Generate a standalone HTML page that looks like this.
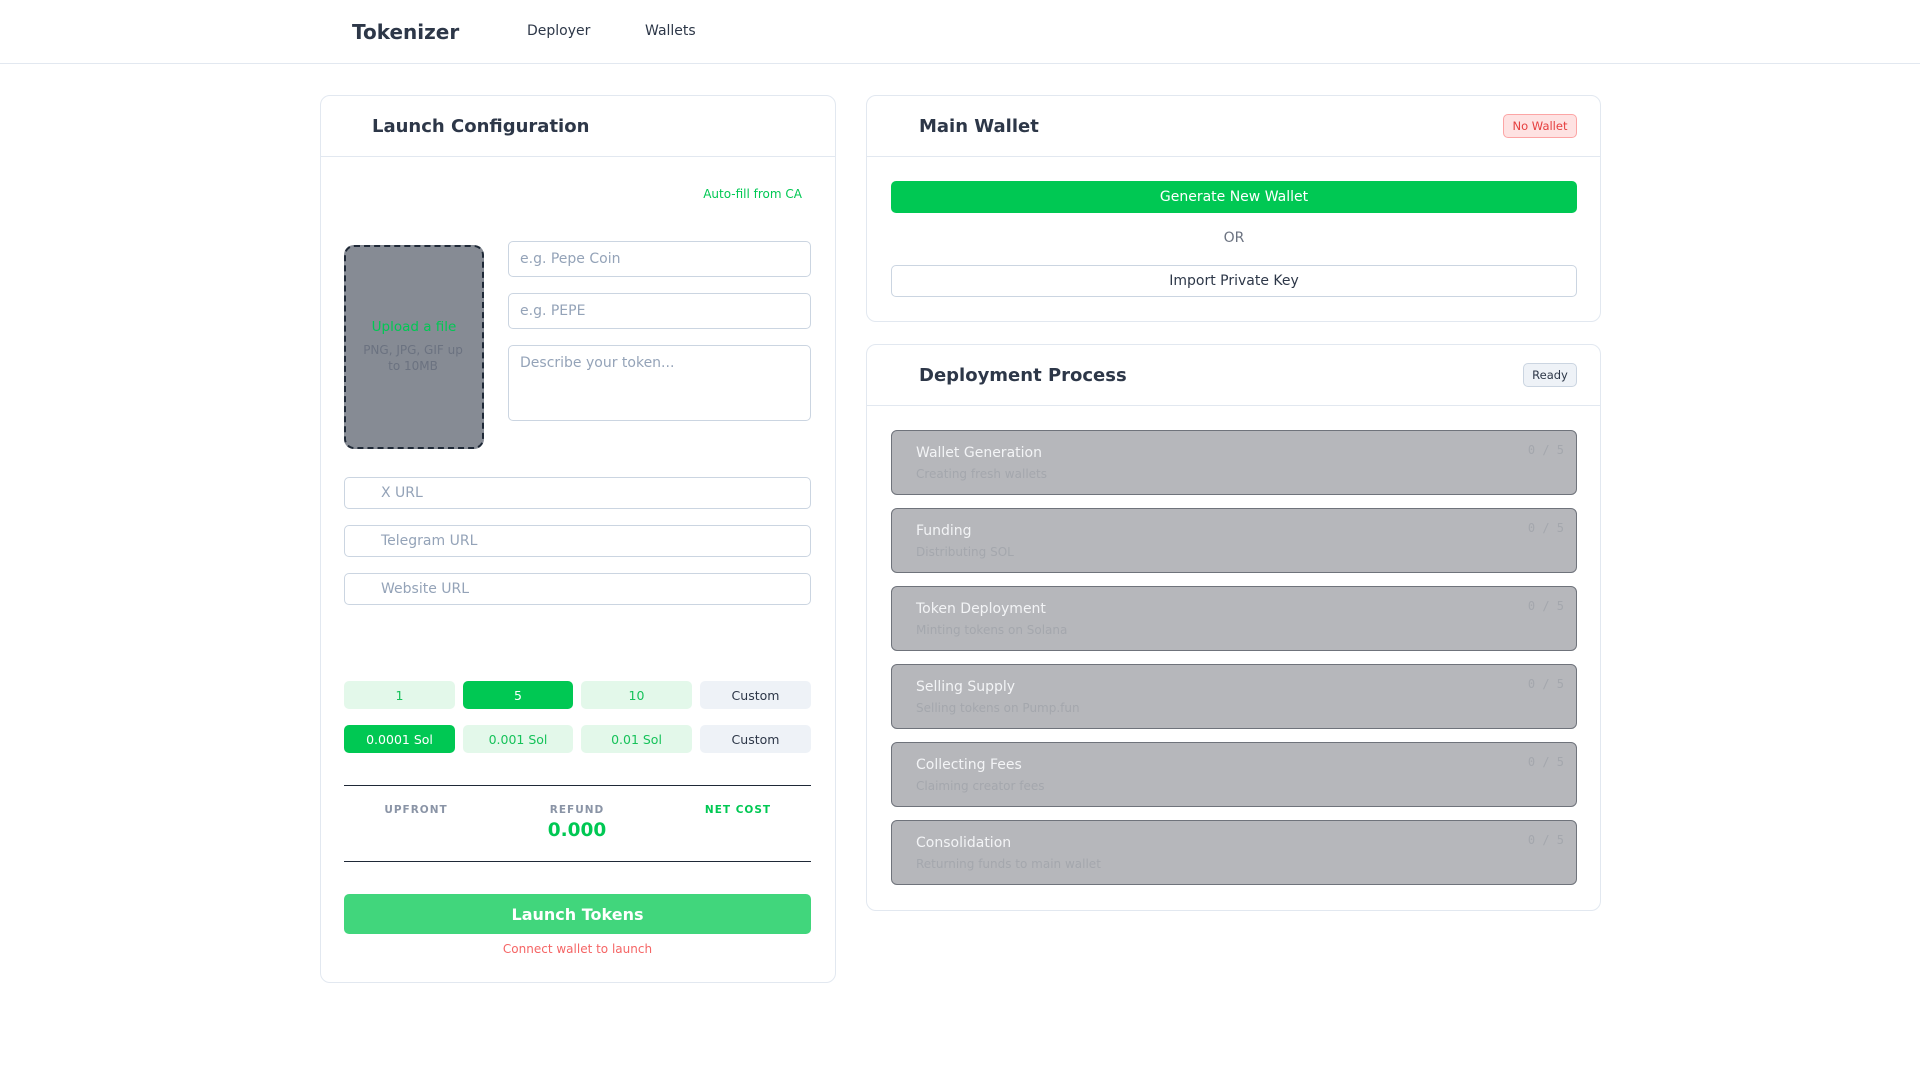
<!DOCTYPE html>
<html><head><meta charset="utf-8"><style>
*{box-sizing:border-box;margin:0;padding:0}
body{width:1920px;height:1080px;background:#fff;font-family:"DejaVu Sans","Liberation Sans",sans-serif;color:#2d3748;position:relative;overflow:hidden}
.a{position:absolute}
.hdr{left:0;top:0;width:1920px;height:64px;border-bottom:1px solid #e2e8f0}
.card{border:1px solid #e2e8f0;border-radius:10px;background:#fff}
.inp{border:1px solid #cbd5e1;border-radius:5px;color:#94a3b8;font-size:14px;padding-left:11px;display:flex;align-items:center}
.btn{border-radius:5px;font-size:12.5px;display:flex;align-items:center;justify-content:center}
.lg{background:#e3f8ea;color:#16c25a}
.gr{background:#00c853;color:#fff}
.gy{background:#eef2f7;color:#2d3748}
.step{left:891px;width:686px;height:65px;background:#b6b7bb;border:1px solid #6f737b;border-radius:6px}
.step .t{position:absolute;left:24px;top:14px;color:#f3f4f6;font-size:14px}
.step .s{position:absolute;left:24px;top:36px;color:#a4a7ad;font-size:12px}
.step .n{position:absolute;right:12px;top:12px;color:#a4a7ad;font-size:12px;font-family:"DejaVu Sans Mono",monospace}
.lbl{font-size:10.5px;font-weight:bold;letter-spacing:1px;color:#8a94a6;text-align:center;width:120px}
</style></head><body>
<div class="a hdr"></div>
<div class="a" style="left:352px;top:20px;font-size:20px;font-weight:bold;color:#2d3748">Tokenizer</div>
<div class="a" style="left:527px;top:23px;font-size:14px">Deployer</div>
<div class="a" style="left:645px;top:23px;font-size:14px">Wallets</div>

<div class="a card" style="left:320px;top:95px;width:516px;height:888px"></div>
<div class="a" style="left:320px;top:156px;width:516px;height:1px;background:#e2e8f0"></div>
<div class="a" style="left:372px;top:116px;font-size:18px;font-weight:bold">Launch Configuration</div>
<div class="a" style="left:600px;top:187px;width:202px;text-align:right;font-size:12px;color:#00c853">Auto-fill from CA</div>
<div class="a" style="left:344px;top:245px;width:140px;height:204px;background:#868b94;border:2px dashed #1f2937;border-radius:10px"></div>
<div class="a" style="left:346px;top:319px;width:136px;text-align:center;font-size:13.5px;color:#00c853">Upload a file</div>
<div class="a" style="left:358px;top:342px;width:110px;text-align:center;font-size:12px;color:#6b7280;line-height:16px">PNG, JPG, GIF up to 10MB</div>
<div class="a inp" style="left:508px;top:241px;width:303px;height:36px">e.g. Pepe Coin</div>
<div class="a inp" style="left:508px;top:293px;width:303px;height:36px">e.g. PEPE</div>
<div class="a inp" style="left:508px;top:345px;width:303px;height:76px;align-items:flex-start;padding-top:9px">Describe your token...</div>
<div class="a inp" style="left:344px;top:477px;width:467px;height:32px;padding-left:36px">X URL</div>
<div class="a inp" style="left:344px;top:525px;width:467px;height:32px;padding-left:36px">Telegram URL</div>
<div class="a inp" style="left:344px;top:573px;width:467px;height:32px;padding-left:36px">Website URL</div>
<div class="a btn lg" style="left:344px;top:681px;width:111px;height:28px">1</div>
<div class="a btn gr" style="left:463px;top:681px;width:110px;height:28px">5</div>
<div class="a btn lg" style="left:581px;top:681px;width:111px;height:28px">10</div>
<div class="a btn gy" style="left:700px;top:681px;width:111px;height:28px">Custom</div>
<div class="a btn gr" style="left:344px;top:725px;width:111px;height:28px">0.0001 Sol</div>
<div class="a btn lg" style="left:463px;top:725px;width:110px;height:28px">0.001 Sol</div>
<div class="a btn lg" style="left:581px;top:725px;width:111px;height:28px">0.01 Sol</div>
<div class="a btn gy" style="left:700px;top:725px;width:111px;height:28px">Custom</div>
<div class="a" style="left:344px;top:785px;width:467px;height:1px;background:#1f2937"></div>
<div class="a lbl" style="left:356px;top:804px">UPFRONT</div>
<div class="a lbl" style="left:517px;top:804px">REFUND</div>
<div class="a lbl" style="left:678px;top:804px;color:#00c853">NET COST</div>
<div class="a" style="left:517px;top:820px;width:120px;text-align:center;font-size:18.5px;font-weight:bold;color:#00c853">0.000</div>
<div class="a" style="left:344px;top:861px;width:467px;height:1px;background:#1f2937"></div>
<div class="a btn" style="left:344px;top:894px;width:467px;height:40px;background:#41d67c;color:#fff;font-size:16px;font-weight:bold">Launch Tokens</div>
<div class="a" style="left:344px;top:942px;width:467px;text-align:center;font-size:12px;color:#f56565">Connect wallet to launch</div>

<div class="a card" style="left:866px;top:95px;width:735px;height:227px"></div>
<div class="a" style="left:866px;top:156px;width:735px;height:1px;background:#e2e8f0"></div>
<div class="a" style="left:919px;top:116px;font-size:18px;font-weight:bold">Main Wallet</div>
<div class="a btn" style="left:1503px;top:114px;width:74px;height:24px;background:#fee2e2;border:1px solid #fca5a5;color:#e53e3e;font-size:11.5px">No Wallet</div>
<div class="a btn gr" style="left:891px;top:181px;width:686px;height:32px;font-size:14px">Generate New Wallet</div>
<div class="a" style="left:891px;top:230px;width:686px;text-align:center;font-size:14px;color:#6b7280">OR</div>
<div class="a btn" style="left:891px;top:265px;width:686px;height:32px;font-size:14px;border:1px solid #cbd5e1;color:#2d3748">Import Private Key</div>

<div class="a card" style="left:866px;top:344px;width:735px;height:567px"></div>
<div class="a" style="left:866px;top:405px;width:735px;height:1px;background:#e2e8f0"></div>
<div class="a" style="left:919px;top:365px;font-size:18px;font-weight:bold">Deployment Process</div>
<div class="a btn" style="left:1523px;top:363px;width:54px;height:24px;background:#eef2f7;border:1px solid #cbd5e1;color:#2d3748;font-size:11.5px">Ready</div>
<div class="a step" style="top:430px"><div class="t">Wallet Generation</div><div class="s">Creating fresh wallets</div><div class="n">0 / 5</div></div>
<div class="a step" style="top:508px"><div class="t">Funding</div><div class="s">Distributing SOL</div><div class="n">0 / 5</div></div>
<div class="a step" style="top:586px"><div class="t">Token Deployment</div><div class="s">Minting tokens on Solana</div><div class="n">0 / 5</div></div>
<div class="a step" style="top:664px"><div class="t">Selling Supply</div><div class="s">Selling tokens on Pump.fun</div><div class="n">0 / 5</div></div>
<div class="a step" style="top:742px"><div class="t">Collecting Fees</div><div class="s">Claiming creator fees</div><div class="n">0 / 5</div></div>
<div class="a step" style="top:820px"><div class="t">Consolidation</div><div class="s">Returning funds to main wallet</div><div class="n">0 / 5</div></div>
</body></html>
